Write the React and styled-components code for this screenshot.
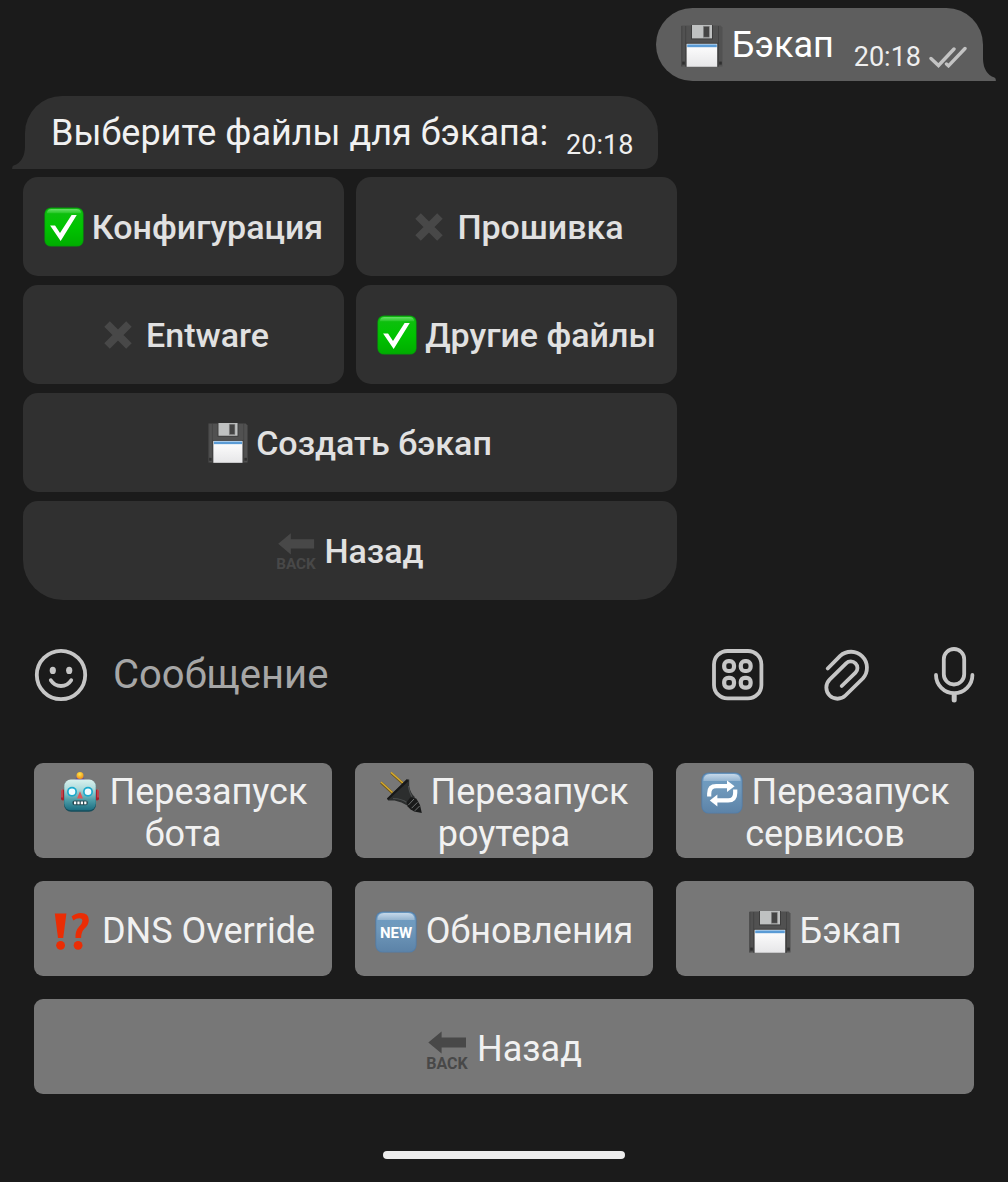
import React, { useState } from "react";
import styled, { createGlobalStyle } from "styled-components";

const GlobalStyle = createGlobalStyle`
  *, *::before, *::after { box-sizing: border-box; }
  body {
    margin: 0;
    background: #1b1b1b;
    font-family: Roboto, "Noto Sans", sans-serif;
  }
  button, input { font: inherit; color: inherit; border: 0; margin: 0; }
  button { cursor: pointer; }
`;

const Screen = styled.div`
  display: flex;
  flex-direction: column;
  min-height: 100vh;
  color: #f1f1f1;
`;

const Chat = styled.main`
  display: flex;
  flex-direction: column;
  gap: 15px;
  padding: 8px 25px 0;
`;

const Bubble = styled.article`
  position: relative;
  display: flex;
  align-items: flex-end;
  align-self: ${(p) => (p.$out ? "flex-end" : "flex-start")};
  padding: ${(p) => (p.$out ? "15px 16px 8px 25px" : "15px 25px 8px 26px")};
  border-radius: ${(p) => (p.$out ? "37px 37px 0 37px" : "37px 37px 14px 0")};
  background: ${(p) => (p.$out ? "#5e5e5e" : "#303030")};
  color: ${(p) => (p.$out ? "#ffffff" : "#f1f1f1")};
`;

const Tail = styled.svg`
  position: absolute;
  bottom: 0;
  ${(p) => (p.$out ? "left: 100%;" : "right: 100%; transform: scaleX(-1);")}
  width: 13px;
  height: 22px;
  fill: ${(p) => (p.$out ? "#5e5e5e" : "#303030")};
`;

const MessageText = styled.p`
  margin: 0 0 6px;
  font-size: 36px;
  line-height: 44px;
`;

const Meta = styled.span`
  display: flex;
  align-items: center;
  gap: 8px;
  margin-left: ${(p) => (p.$out ? "20px" : "18px")};
  font-size: 27px;
  line-height: 32px;
  color: #efefef;
`;

const Checks = styled.svg`
  width: 38px;
  height: 22px;
  fill: none;
  stroke: #c3c3c3;
  stroke-width: 3.4;
  stroke-linecap: round;
`;

const IncomingGroup = styled.section`
  display: flex;
  flex-direction: column;
  gap: 8px;
`;

const InlineKeyboard = styled.div`
  display: grid;
  grid-template-columns: 1fr 1fr;
  gap: 9px 12px;
  width: 100%;
  max-width: 654px;
  margin-left: -2px;
`;

const InlineButton = styled.button`
  display: flex;
  align-items: center;
  justify-content: center;
  gap: 8px;
  grid-column: ${(p) => (p.$wide ? "1 / -1" : "auto")};
  min-height: 99px;
  padding: 0 8px;
  border-radius: ${(p) => (p.$last ? "15px 15px 40px 40px" : "15px")};
  background: #303030;
  color: #e1e1e1;
  font-size: 34px;
  line-height: 42px;
  font-weight: 500;
  white-space: nowrap;
`;

const Glyph = styled.svg`
  flex: none;
  overflow: visible;
  width: ${(p) => p.$size}px;
  height: ${(p) => p.$size}px;
`;

const TextGlyph = styled(Glyph)`
  vertical-align: -8px;
  margin: -4px 9px -2px 0;
`;

const Composer = styled.form`
  display: flex;
  align-items: center;
  padding: 48px 27px 61px 34px;
`;

const Field = styled.input`
  flex: 1;
  min-width: 0;
  height: 54px;
  padding: 0 0 2px 25px;
  background: transparent;
  font-size: 40px;
  line-height: 48px;
  outline: none;
  &::placeholder { color: #a6a6a6; opacity: 1; }
`;

const Tools = styled.div`
  display: flex;
  gap: 54px;
`;

const IconButton = styled.button`
  display: block;
  padding: 0;
  width: 54px;
  height: 54px;
  background: transparent;
  svg {
    display: block;
    width: 54px;
    height: 54px;
    overflow: visible;
    fill: none;
    stroke: #c6c6c6;
    stroke-width: 3.8;
    stroke-linecap: round;
    stroke-linejoin: round;
  }
`;

const ReplyKeyboard = styled.nav`
  display: grid;
  grid-template-columns: repeat(3, 1fr);
  gap: 23px;
  padding: 0 34px;
`;

const ReplyButton = styled.button`
  grid-column: ${(p) => (p.$wide ? "1 / -1" : "auto")};
  min-height: 95px;
  padding: 4px 16px 0;
  border-radius: 9px;
  background: #777777;
  color: #f1f1f1;
  font-size: 36px;
  line-height: 42px;
  text-align: center;
`;

const HomeBar = styled.div`
  width: 24%;
  height: 8px;
  margin: 57px auto 23px;
  border-radius: 4px;
  background: #ededed;
`;

function Floppy() {
  return (
    <>
      <defs>
        <linearGradient id="paper" x1="0" y1="0" x2="0" y2="1">
          <stop offset="0" stopColor="#ffffff" />
          <stop offset="1" stopColor="#e6e6e8" />
        </linearGradient>
      </defs>
      <path d="M0.5 0.5H39.5L41.5 2.5V41.5H0.5Z" fill="#515151" />
      <path d="M0.8 1V41.5M4.6 1V41.5M37.5 1V41.5" stroke="#404040" strokeWidth="0.8" />
      <rect x="1.2" y="36.6" width="2.6" height="3" fill="#2f2f2f" />
      <rect x="38.2" y="36.6" width="2.6" height="3" fill="#2f2f2f" />
      <rect x="10" y="0" width="22" height="14.4" fill="#3d3d3d" />
      <rect x="11" y="0" width="20" height="13.4" fill="#bfc1c1" />
      <rect x="22.3" y="1.2" width="6" height="11" fill="#444444" stroke="#8c8c8c" strokeWidth="0.6" />
      <rect x="4.8" y="17.8" width="32.4" height="24" fill="#3d3d3d" />
      <rect x="5.6" y="18.8" width="30.6" height="23" fill="url(#paper)" />
      <rect x="6.2" y="19.4" width="29.6" height="2.8" fill="#5a9bd5" />
    </>
  );
}

function GreenCheck() {
  return (
    <>
      <defs>
        <linearGradient id="green" x1="0" y1="0" x2="0" y2="1">
          <stop offset="0" stopColor="#12bd12" />
          <stop offset="0.5" stopColor="#00c400" />
          <stop offset="1" stopColor="#00ad00" />
        </linearGradient>
        <linearGradient id="gloss" x1="0" y1="0" x2="0" y2="1">
          <stop offset="0" stopColor="#69e069" />
          <stop offset="1" stopColor="#25c825" />
        </linearGradient>
      </defs>
      <rect x="0.4" y="0.4" width="41.2" height="41.2" rx="7" fill="#04950a" />
      <rect x="1.2" y="1.4" width="39.6" height="39.4" rx="6" fill="url(#green)" />
      <path d="M3 6.5Q3.2 2 8 2H34Q38.8 2 39 6.5Z" fill="url(#gloss)" />
      <path d="M6.4 19.5H11.6L16.8 27.2L29 8.4H34.4L17.5 35.6Z" fill="#ffffff" />
    </>
  );
}

function Cross() {
  return <path d="M9.5 9.5L32.5 32.5M32.5 9.5L9.5 32.5" stroke="#484848" strokeWidth="8.2" fill="none" />;
}

function Back() {
  return (
    <>
      <path d="M2.3 13.4L15.6 2.4V8.6H40V18.4H15.6V24.6Z" fill="#484848" />
      <text
        x="21"
        y="39.5"
        textAnchor="middle"
        fill="#484848"
        fontFamily="Roboto, sans-serif"
        fontWeight="700"
        fontSize="16"
      >
        BACK
      </text>
    </>
  );
}

function BlueTile() {
  return (
    <>
      <defs>
        <linearGradient id="tile" x1="0" y1="0" x2="0" y2="1">
          <stop offset="0" stopColor="#6d9cc4" />
          <stop offset="0.4" stopColor="#7099bb" />
          <stop offset="1" stopColor="#5c83a8" />
        </linearGradient>
        <linearGradient id="shine" x1="0" y1="0" x2="0" y2="1">
          <stop offset="0" stopColor="#c5d8ea" />
          <stop offset="1" stopColor="#94b4d0" />
        </linearGradient>
      </defs>
      <rect x="0.4" y="0.4" width="41.2" height="41.2" rx="7.5" fill="#527da8" />
      <rect x="1.3" y="1.3" width="39.4" height="39.4" rx="6.6" fill="url(#tile)" />
      <path d="M2.4 9Q2.4 2 9 2H33Q39.6 2 39.6 9Z" fill="url(#shine)" />
    </>
  );
}

function NewTile() {
  return (
    <>
      <BlueTile />
      <text
        x="21"
        y="26.6"
        textAnchor="middle"
        fill="#ffffff"
        fontFamily="Roboto, sans-serif"
        fontWeight="700"
        fontSize="15"
      >
        NEW
      </text>
    </>
  );
}

function RepeatTile() {
  return (
    <>
      <BlueTile />
      <path
        d="M8.2 24.6V21.5Q8.2 14.2 15.2 14.2H27M34.2 17.4V21Q34.2 28.4 27.2 28.4H15"
        fill="none"
        stroke="#ffffff"
        strokeWidth="4.2"
      />
      <path d="M26 8.4L33.6 14.2L26 20Z" fill="#ffffff" />
      <path d="M16.4 22.4V34.6L8.8 28.6Z" fill="#ffffff" />
    </>
  );
}

function Robot() {
  return (
    <>
      <defs>
        <linearGradient id="face" x1="0" y1="0" x2="0" y2="1">
          <stop offset="0" stopColor="#d9f1ee" />
          <stop offset="0.3" stopColor="#b0dcdc" />
          <stop offset="0.65" stopColor="#50a0aa" />
          <stop offset="1" stopColor="#1b6e82" />
        </linearGradient>
        <radialGradient id="lamp" cx="0.45" cy="0.3" r="0.7">
          <stop offset="0" stopColor="#ffe94a" />
          <stop offset="1" stopColor="#ee8b18" />
        </radialGradient>
      </defs>
      <g transform="translate(1 0)">
        <rect x="1" y="17.5" width="4" height="11" rx="2" fill="#a51f2a" />
        <rect x="35" y="17.5" width="4" height="11" rx="2" fill="#a51f2a" />
        <path d="M2 17.5v8M38 17.5v8" stroke="#d56a6c" strokeWidth="1" />
        <path d="M15 9Q15.5 4.8 20 4.8Q24.5 4.8 25 9Z" fill="#6b5290" />
        <circle cx="20" cy="3.6" r="3.5" fill="url(#lamp)" />
        <rect x="4" y="8" width="32" height="31.8" rx="7" fill="#164e5c" />
        <rect x="4.2" y="7.6" width="31.6" height="30.6" rx="6.6" fill="url(#face)" />
        <circle cx="12" cy="19.8" r="5" fill="#1ba9cc" />
        <circle cx="28" cy="19.8" r="5" fill="#1ba9cc" />
        <circle cx="12" cy="19.8" r="3.3" fill="#eefcff" />
        <circle cx="28" cy="19.8" r="3.3" fill="#eefcff" />
        <path d="M20 19.2L23 26.4H17Z" fill="#df5658" />
        <rect x="12.4" y="28.4" width="15.4" height="4.8" rx="2.2" fill="#264b55" />
        <path d="M14 30.8H27" stroke="#ffffff" strokeWidth="2.8" strokeDasharray="2.2 1.2" />
      </g>
    </>
  );
}

function Plug() {
  return (
    <>
      <path d="M1 10.5L12.5 21M11 0.8L23 11.5" stroke="#6d5518" strokeWidth="2.4" />
      <path d="M1 10L12.5 20.5M11 0.4L23 11" stroke="#d4a92f" strokeWidth="1.5" />
      <path d="M26.8 7.2L29.2 7.6V14.6Q30.8 22 35 25.2L27.2 33.4Q22 29.8 14.6 28.4H8.2L7 26.4Z" fill="#2c2e2e" />
      <path d="M26.8 7.2L7 26.4L8.2 28L28.6 9Z" fill="#171818" />
      <path d="M13 26.5Q22 26.8 26.4 30.3M28.5 14Q29.5 21 32 24.6" stroke="#4b4e4e" strokeWidth="1.2" fill="none" />
      <path d="M30.5 25.2L36.2 26.4L38.2 29.8L40 33L41.8 41L34.2 39.6L30.4 37.2L27.6 34.6L26.8 30Z" fill="#191a1a" />
      <path d="M28.4 33L34 27M31.6 36.2L37.4 30.4M34.8 38.8L39.8 33.8" stroke="#707373" strokeWidth="1" />
    </>
  );
}

function Interrobang() {
  return (
    <g fill="#ea2d05" transform="translate(3.4 0)">
      <path d="M0.4 2.4H12L8.8 27H3.6Z" />
      <circle cx="6.2" cy="34.3" r="4.4" />
      <path d="M17.2 5.5Q21.2 2 26.5 2Q34.4 2 34.4 9.3Q34.4 13.8 30.2 17.5Q26.8 20.3 26.7 27H21.1Q20.8 19.6 24.6 15.7Q28 12.4 28 9.8Q28 7.2 25 7.2Q21.4 7.2 19 9.4Z" />
      <circle cx="23.7" cy="34.3" r="4.4" />
    </g>
  );
}

const drawings = {
  floppy: Floppy,
  check: GreenCheck,
  cross: Cross,
  back: Back,
  fresh: NewTile,
  repeat: RepeatTile,
  robot: Robot,
  plug: Plug,
  interrobang: Interrobang,
};

function Emoji({ name, size = 42, inText = false }) {
  const Drawing = drawings[name];
  const Box = inText ? TextGlyph : Glyph;
  return (
    <Box $size={size} viewBox="0 0 42 42" aria-hidden="true">
      <Drawing />
    </Box>
  );
}

function BubbleTail({ out }) {
  return (
    <Tail $out={out} viewBox="0 0 13 22" aria-hidden="true">
      <path d="M-1 0H0Q0.4 14.5 11.4 18.6Q13.2 19.6 12.8 22H-1Z" />
    </Tail>
  );
}

const replyButtons = [
  { icon: "robot", label: "Перезапуск бота" },
  { icon: "plug", label: "Перезапуск роутера" },
  { icon: "repeat", label: "Перезапуск сервисов" },
  { icon: "interrobang", label: "DNS Override" },
  { icon: "fresh", label: "Обновления" },
  { icon: "floppy", label: "Бэкап" },
  { icon: "back", label: "Назад", wide: true },
];

export default function App() {
  const [files, setFiles] = useState([
    { label: "Конфигурация", on: true },
    { label: "Прошивка", on: false },
    { label: "Entware", on: false },
    { label: "Другие файлы", on: true },
  ]);
  const toggle = (index) =>
    setFiles(files.map((f, i) => (i === index ? { ...f, on: !f.on } : f)));

  return (
    <Screen>
      <GlobalStyle />
      <Chat>
        <Bubble $out>
          <MessageText>
            <Emoji name="floppy" inText />
            Бэкап
          </MessageText>
          <Meta $out>
            <time>20:18</time>
            <Checks viewBox="0 0 38 22" aria-hidden="true">
              <path d="M2 12.5L9.5 19.5L25 3M17.5 18L19.5 19.8L36 2.5" />
            </Checks>
          </Meta>
          <BubbleTail out />
        </Bubble>
        <IncomingGroup>
          <Bubble>
            <MessageText>Выберите файлы для бэкапа:</MessageText>
            <Meta>
              <time>20:18</time>
            </Meta>
            <BubbleTail />
          </Bubble>
          <InlineKeyboard>
            {files.map((f, i) => (
              <InlineButton key={f.label} type="button" aria-pressed={f.on} onClick={() => toggle(i)}>
                <Emoji name={f.on ? "check" : "cross"} size={40} />
                <span>{f.label}</span>
              </InlineButton>
            ))}
            <InlineButton type="button" $wide>
              <Emoji name="floppy" size={40} />
              <span>Создать бэкап</span>
            </InlineButton>
            <InlineButton type="button" $wide $last>
              <Emoji name="back" size={40} />
              <span>Назад</span>
            </InlineButton>
          </InlineKeyboard>
        </IncomingGroup>
      </Chat>

      <Composer onSubmit={(e) => e.preventDefault()}>
        <IconButton type="button" aria-label="Эмодзи">
          <svg viewBox="0 0 54 54">
            <circle cx="27" cy="27" r="24.2" />
            <path d="M16.8 32.2Q20.5 38 27 38Q33.5 38 37.2 32.2" />
            <ellipse cx="18.8" cy="22.4" rx="3.1" ry="3.7" fill="#c6c6c6" stroke="none" />
            <ellipse cx="35.2" cy="22.4" rx="3.1" ry="3.7" fill="#c6c6c6" stroke="none" />
          </svg>
        </IconButton>
        <Field type="text" aria-label="Сообщение" placeholder="Сообщение" />
        <Tools>
          <IconButton type="button" aria-label="Клавиатура бота">
            <svg viewBox="0 0 54 54">
              <rect x="3" y="3" width="47.4" height="47.4" rx="13.5" />
              <g strokeWidth="4.2">
                <rect x="13.2" y="13.2" width="9.8" height="9.8" rx="4" />
                <rect x="29.8" y="13.2" width="9.8" height="9.8" rx="4" />
                <rect x="13.2" y="29.8" width="9.8" height="9.8" rx="4" />
                <rect x="29.8" y="29.8" width="9.8" height="9.8" rx="4" />
              </g>
            </svg>
          </IconButton>
          <IconButton type="button" aria-label="Прикрепить">
            <svg viewBox="-4 0 54 54">
              <path d="M4.7 20.5L17.2 7.9A16 16 0 0 1 39.8 30.5L22.4 47.5A11.1 11.1 0 0 1 6.6 31.7L23.1 15.3A6.6 6.6 0 0 1 32.5 24.7L18.7 38" />
            </svg>
          </IconButton>
          <IconButton type="button" aria-label="Голосовое сообщение">
            <svg viewBox="-5 2 54 54">
              <rect x="11.8" y="3" width="20.4" height="35.5" rx="10.2" />
              <path d="M4 29A18.2 18.2 0 0 0 40.4 29" />
              <path d="M22.2 49V54" strokeWidth="5" />
            </svg>
          </IconButton>
        </Tools>
      </Composer>

      <ReplyKeyboard aria-label="Клавиатура">
        {replyButtons.map((b) => (
          <ReplyButton key={b.label} type="button" $wide={b.wide}>
            <Emoji name={b.icon} inText />
            {b.label}
          </ReplyButton>
        ))}
      </ReplyKeyboard>
      <HomeBar />
    </Screen>
  );
}
